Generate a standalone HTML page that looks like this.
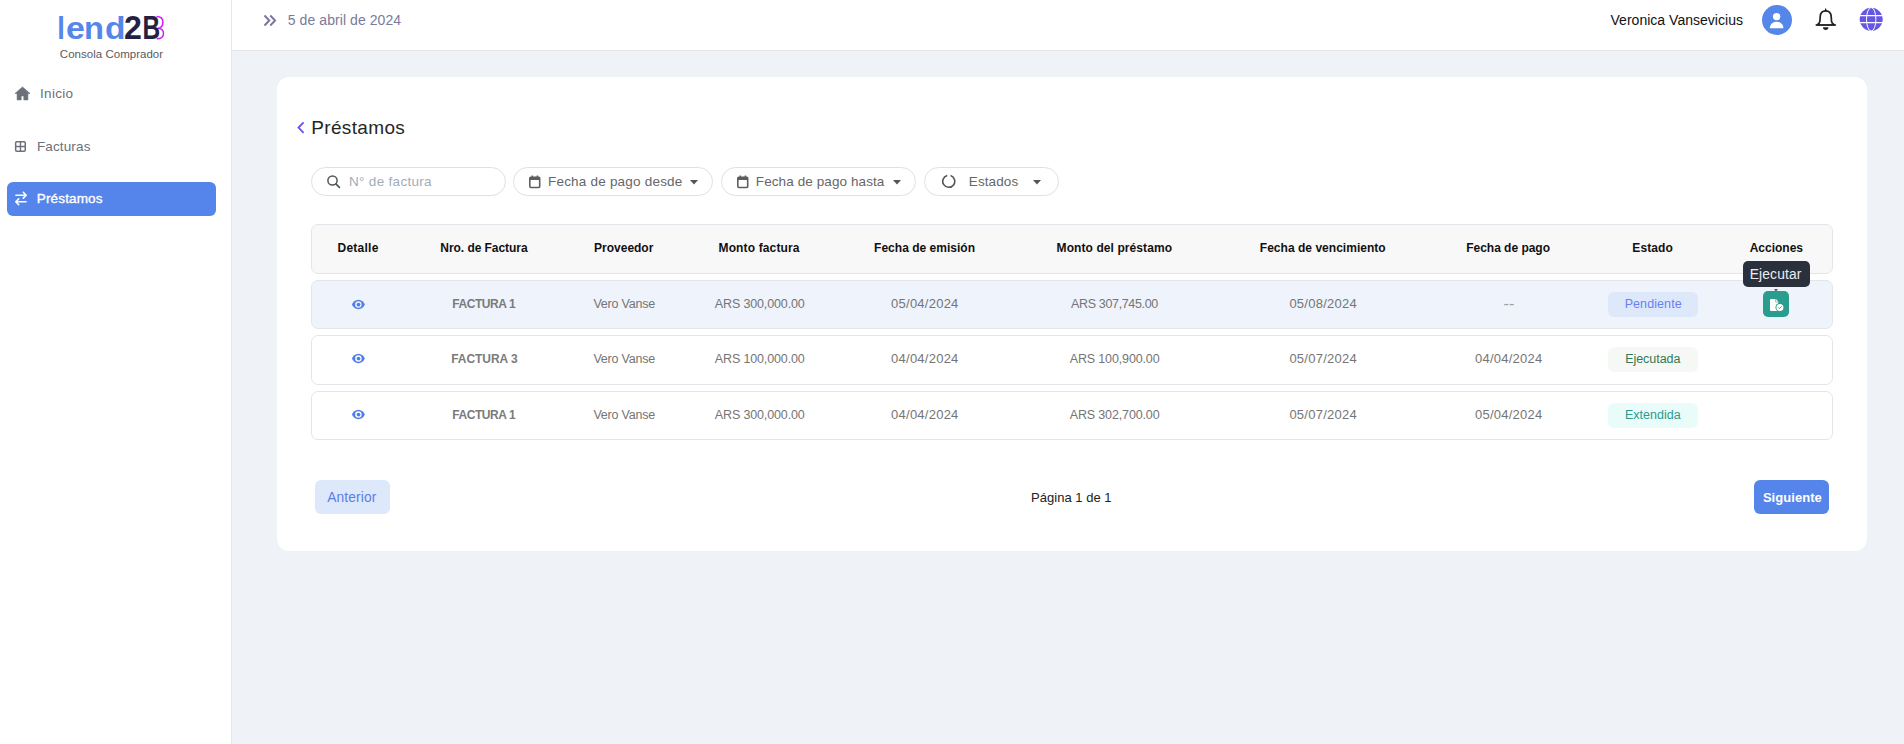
<!DOCTYPE html>
<html><head><meta charset="utf-8">
<style>
*{box-sizing:border-box;margin:0;padding:0}
html,body{width:1904px;height:744px;overflow:hidden;background:#eff2f7;font-family:"Liberation Sans",sans-serif}
.abs{position:absolute}
.t{position:absolute;white-space:nowrap;line-height:normal}
.box{position:absolute}
</style></head><body>
<div class="box" style="left:0;top:0;width:231px;height:744px;background:#fff"></div>
<div class="box" style="left:231px;top:0;width:1px;height:744px;background:#e4e6eb"></div>
<div class="box" style="left:232px;top:0;width:1672px;height:50px;background:#fff"></div>
<div class="box" style="left:232px;top:50px;width:1672px;height:1px;background:#e4e6eb"></div>
<svg class="abs" style="left:150px;top:10px" width="20" height="34" viewBox="150 10 20 34"><path d="M156.5 16.4C160.6 16.4 162.9 18.6 162.9 21.9C162.9 25.2 160.8 27.6 158.6 28.3C161.4 28.9 163.5 31 163.5 33.4C163.5 36.6 161.2 38.7 156.8 38.7" fill="none" stroke="#d21cf5" stroke-width="1.5"/></svg>
<div class="t" style="left:56.80px;top:11px;font-size:31px;font-weight:bold;color:#5586ea;transform-origin:2.00px 0;transform:scaleX(0.880)">l</div>
<div class="t" style="left:65.70px;top:11px;font-size:31px;font-weight:bold;color:#5586ea;transform-origin:1.00px 0;transform:scaleX(1.093)">e</div>
<div class="t" style="left:84.20px;top:11px;font-size:31px;font-weight:bold;color:#5586ea;transform-origin:2.00px 0;transform:scaleX(1.053)">n</div>
<div class="t" style="left:104.50px;top:11px;font-size:31px;font-weight:bold;color:#5586ea;transform-origin:1.00px 0;transform:scaleX(1.081)">d</div>
<div class="t" style="left:124.30px;top:9px;font-size:33.4px;font-weight:bold;color:#251f41;transform-origin:1.00px 0;transform:scaleX(0.963)">2</div>
<div class="t" style="left:141.90px;top:9px;font-size:33.4px;font-weight:bold;color:#251f41;transform-origin:2.00px 0;transform:scaleX(0.733)">B</div>
<div class="t" style="left:59.80px;top:47.60px;font-size:11.5px;color:#5a5a5a;letter-spacing:0.025px;">Consola Comprador</div>
<svg class="abs" style="left:14px;top:86px" width="17" height="15" viewBox="0 0 17 15"><path d="M8.5 0.9L1 7.5h2.1v6.4h4.1V9.9h2.6v4h4.1V7.5H16z" fill="#6c7079" stroke="#6c7079" stroke-width="0.6" stroke-linejoin="round"/></svg>
<div class="t" style="left:40.00px;top:86.00px;font-size:13.5px;color:#6b7079;letter-spacing:0.32px;">Inicio</div>
<svg class="abs" style="left:14px;top:140px" width="13" height="13" viewBox="0 0 13 13"><rect x="1.65" y="1.65" width="9.6" height="9.6" rx="1.2" fill="none" stroke="#6c7079" stroke-width="1.5"/><path d="M6.45 1.6v9.7M1.6 6.45h9.7" stroke="#6c7079" stroke-width="1.4"/></svg>
<div class="t" style="left:36.90px;top:139.00px;font-size:13.5px;color:#6b7079;letter-spacing:0.143px;">Facturas</div>
<div class="box" style="left:7px;top:182px;width:209px;height:34px;background:#5585ea;border-radius:6px"></div>
<svg class="abs" style="left:0;top:176px" width="40" height="40" viewBox="0 0 40 40"><path d="M15.9 19.2h10M23.3 16.3l2.9 2.9-2.9 2.9M26 25.8H16M18.7 22.9l-2.9 2.9 2.9 2.9" fill="none" stroke="#fff" stroke-width="1.6" stroke-linecap="round" stroke-linejoin="round"/></svg>
<div class="t" style="left:36.80px;top:191.10px;font-size:13.5px;color:#fff;letter-spacing:0.15px;-webkit-text-stroke:0.35px #fff;">Préstamos</div>
<svg class="abs" style="left:263px;top:14px" width="14" height="13" viewBox="0 0 14 13"><path d="M1.5 1.5l4.8 5-4.8 5M7.3 1.5l4.8 5-4.8 5" fill="none" stroke="#76759a" stroke-width="1.9"/></svg>
<div class="t" style="left:287.80px;top:11.70px;font-size:14px;color:#7a7a9a;letter-spacing:0.071px;">5 de abril de 2024</div>
<div class="t" style="left:1610.50px;top:11.70px;font-size:14px;color:#111;letter-spacing:0.021px;">Veronica Vansevicius</div>
<svg class="abs" style="left:1762px;top:5px" width="30" height="30" viewBox="0 0 30 30"><circle cx="15" cy="15" r="15" fill="#5586ea"/><circle cx="14.6" cy="11.6" r="3.7" fill="#fff"/><path d="M7.8 23.3c0-4 3.2-6.6 6.8-6.6s6.8 2.6 6.8 6.6z" fill="#fff"/></svg>
<svg class="abs" style="left:1814px;top:6px" width="24" height="26" viewBox="1814 6 24 26"><path d="M1825.7 7.8L1824.3 11.2H1827.1z" fill="#222"/><path d="M1825.7 10.8C1822.3 10.8 1820.4 13.2 1820.2 16.6L1819.9 21.3C1819.7 22.9 1818.5 24 1817 25H1834.4C1832.9 24 1831.7 22.9 1831.5 21.3L1831.2 16.6C1831 13.2 1829.1 10.8 1825.7 10.8z" fill="none" stroke="#222" stroke-width="1.7" stroke-linejoin="round"/><path d="M1816.2 25H1835.4" stroke="#222" stroke-width="1.6" stroke-linecap="round"/><path d="M1823 27.3H1828.4A2.7 2.6 0 0 1 1823 27.3z" fill="#222"/></svg>
<svg class="abs" style="left:1859px;top:7px" width="25" height="25" viewBox="0 0 25 25"><circle cx="12.2" cy="12.3" r="11.5" fill="#6656e6"/><ellipse cx="12.2" cy="12.3" rx="4.7" ry="11.8" fill="none" stroke="#fff" stroke-width="1"/><path d="M0 8.55h25M0 15.55h25" stroke="#fff" stroke-width="1.15"/></svg>
<div class="box" style="left:277px;top:77px;width:1590px;height:474px;background:#fff;border-radius:12px"></div>
<svg class="abs" style="left:295.5px;top:121px" width="10" height="13" viewBox="0 0 10 13"><path d="M7.6 1.4L2.5 6.6l5.1 5.2" fill="none" stroke="#6a4ff0" stroke-width="1.8"/></svg>
<div class="t" style="left:311.20px;top:116.80px;font-size:19px;color:#262626;letter-spacing:0.35px;">Préstamos</div>
<div class="box" style="left:311px;top:167px;width:195px;height:29px;border:1px solid #dfe0e6;border-radius:15px;background:#fff"></div>
<svg class="abs" style="left:326px;top:174px" width="16" height="16" viewBox="0 0 16 16"><circle cx="6.5" cy="6.5" r="4.6" fill="none" stroke="#555" stroke-width="1.5"/><path d="M9.9 9.9L13.4 13.4" stroke="#555" stroke-width="1.7" stroke-linecap="round"/></svg>
<div class="t" style="left:349.00px;top:174.00px;font-size:13.5px;color:#a3abbb;letter-spacing:0.308px;">N° de factura</div>
<div class="box" style="left:513px;top:167px;width:200px;height:29px;border:1px solid #dfe0e6;border-radius:15px;background:#fff"></div>
<svg class="abs" style="left:529px;top:175px" width="13" height="14" viewBox="0 0 13 14"><rect x="0.8" y="2.2" width="9.9" height="10.3" rx="1" fill="none" stroke="#5e5e5e" stroke-width="1.6"/><rect x="0.8" y="2.2" width="9.9" height="2.8" fill="#5e5e5e"/><path d="M3.3 0.5v2.5M8.4 0.5v2.5" stroke="#5e5e5e" stroke-width="1.5"/></svg>
<div class="t" style="left:548.00px;top:174.10px;font-size:13.5px;color:#666;letter-spacing:0.206px;">Fecha de pago desde</div>
<svg class="abs" style="left:690px;top:180px" width="8" height="5" viewBox="0 0 8 5"><path d="M0 0h8L4 4.6z" fill="#555"/></svg>
<div class="box" style="left:721px;top:167px;width:195px;height:29px;border:1px solid #dfe0e6;border-radius:15px;background:#fff"></div>
<svg class="abs" style="left:737px;top:175px" width="13" height="14" viewBox="0 0 13 14"><rect x="0.8" y="2.2" width="9.9" height="10.3" rx="1" fill="none" stroke="#5e5e5e" stroke-width="1.6"/><rect x="0.8" y="2.2" width="9.9" height="2.8" fill="#5e5e5e"/><path d="M3.3 0.5v2.5M8.4 0.5v2.5" stroke="#5e5e5e" stroke-width="1.5"/></svg>
<div class="t" style="left:755.80px;top:174.10px;font-size:13.5px;color:#666;letter-spacing:0.094px;">Fecha de pago hasta</div>
<svg class="abs" style="left:893px;top:180px" width="8" height="5" viewBox="0 0 8 5"><path d="M0 0h8L4 4.6z" fill="#555"/></svg>
<div class="box" style="left:924px;top:167px;width:135px;height:29px;border:1px solid #dfe0e6;border-radius:15px;background:#fff"></div>
<svg class="abs" style="left:941px;top:174px" width="15" height="15" viewBox="0 0 15 15"><path d="M9.6 1.6A6 6 0 1 1 6.2 1.5" fill="none" stroke="#555" stroke-width="1.6"/></svg>
<div class="t" style="left:968.80px;top:174.10px;font-size:13.5px;color:#666;letter-spacing:0.1px;">Estados</div>
<svg class="abs" style="left:1033px;top:180px" width="8" height="5" viewBox="0 0 8 5"><path d="M0 0h8L4 4.6z" fill="#555"/></svg>
<div class="box" style="left:311px;top:224px;width:1522px;height:50px;border:1px solid #e4e5ea;border-radius:7px;background:#f8f8f8"></div>
<div class="box" style="left:311px;top:280px;width:1522px;height:49px;border:1px solid #e4e5ea;border-radius:7px;background:#eef3fc"></div>
<div class="box" style="left:311px;top:335px;width:1522px;height:50px;border:1px solid #e4e5ea;border-radius:7px;background:#fff"></div>
<div class="box" style="left:311px;top:391px;width:1522px;height:49px;border:1px solid #e4e5ea;border-radius:7px;background:#fff"></div>
<div class="t" style="left:337.50px;top:241.30px;font-size:12px;color:#111;font-weight:bold;letter-spacing:0.25px;">Detalle</div>
<div class="t" style="left:440.30px;top:241.30px;font-size:12px;color:#111;font-weight:bold;letter-spacing:-0.05px;">Nro. de Factura</div>
<div class="t" style="left:594.10px;top:241.30px;font-size:12px;color:#111;font-weight:bold;letter-spacing:-0.013px;">Proveedor</div>
<div class="t" style="left:718.50px;top:241.30px;font-size:12px;color:#111;font-weight:bold;letter-spacing:0.142px;">Monto factura</div>
<div class="t" style="left:874.10px;top:241.30px;font-size:12px;color:#111;font-weight:bold;letter-spacing:0.013px;">Fecha de emisión</div>
<div class="t" style="left:1056.60px;top:241.30px;font-size:12px;color:#111;font-weight:bold;letter-spacing:0.082px;">Monto del préstamo</div>
<div class="t" style="left:1259.80px;top:241.30px;font-size:12px;color:#111;font-weight:bold;letter-spacing:0.026px;">Fecha de vencimiento</div>
<div class="t" style="left:1466.20px;top:241.30px;font-size:12px;color:#111;font-weight:bold;letter-spacing:-0.017px;">Fecha de pago</div>
<div class="t" style="left:1632.30px;top:241.30px;font-size:12px;color:#111;font-weight:bold;letter-spacing:0.1px;">Estado</div>
<div class="t" style="left:1749.70px;top:241.30px;font-size:12px;color:#111;font-weight:bold;">Acciones</div>
<svg class="abs" style="left:351px;top:298.5px" width="15" height="11" viewBox="0 0 15 11"><path d="M7.4 0.8C4.3 0.8 1.9 3 0.9 5.5c1 2.5 3.4 4.7 6.5 4.7s5.5-2.2 6.5-4.7C12.9 3 10.5 0.8 7.4 0.8z" fill="#4f7fe8"/><circle cx="7.4" cy="5.5" r="3.2" fill="#eef3fc"/><circle cx="7.5" cy="5.6" r="1.9" fill="#4f7fe8"/></svg>
<div class="t" style="left:452.15px;top:297.30px;font-size:12px;color:#7b7b7b;font-weight:bold;letter-spacing:-0.412px;">FACTURA 1</div>
<div class="t" style="left:593.40px;top:297.30px;font-size:12.5px;color:#757575;letter-spacing:-0.2px;">Vero Vanse</div>
<div class="t" style="left:714.80px;top:297.30px;font-size:12.5px;color:#757575;letter-spacing:-0.138px;">ARS 300,000.00</div>
<div class="t" style="left:891.10px;top:296.30px;font-size:13px;color:#757575;letter-spacing:0.244px;">05/04/2024</div>
<div class="t" style="left:1071.10px;top:297.30px;font-size:12.5px;color:#757575;letter-spacing:-0.354px;">ARS 307,745.00</div>
<div class="t" style="left:1289.40px;top:296.30px;font-size:13px;color:#757575;letter-spacing:0.244px;">05/08/2024</div>
<div class="t" style="left:1503.60px;top:294.60px;font-size:16px;color:#a0a0a0;">--</div>
<div class="box" style="left:1608px;top:291.8px;width:90px;height:25px;border-radius:6px;background:#dde9fa"></div>
<div class="t" style="left:1624.65px;top:297.30px;font-size:12.5px;color:#6a7ff0;letter-spacing:0.088px;">Pendiente</div>
<svg class="abs" style="left:351px;top:353.4px" width="15" height="11" viewBox="0 0 15 11"><path d="M7.4 0.8C4.3 0.8 1.9 3 0.9 5.5c1 2.5 3.4 4.7 6.5 4.7s5.5-2.2 6.5-4.7C12.9 3 10.5 0.8 7.4 0.8z" fill="#4f7fe8"/><circle cx="7.4" cy="5.5" r="3.2" fill="#fff"/><circle cx="7.5" cy="5.6" r="1.9" fill="#4f7fe8"/></svg>
<div class="t" style="left:451.25px;top:352.20px;font-size:12px;color:#7b7b7b;font-weight:bold;letter-spacing:-0.062px;">FACTURA 3</div>
<div class="t" style="left:593.40px;top:352.20px;font-size:12.5px;color:#757575;letter-spacing:-0.2px;">Vero Vanse</div>
<div class="t" style="left:714.80px;top:352.20px;font-size:12.5px;color:#757575;letter-spacing:-0.138px;">ARS 100,000.00</div>
<div class="t" style="left:891.10px;top:351.20px;font-size:13px;color:#757575;letter-spacing:0.244px;">04/04/2024</div>
<div class="t" style="left:1069.70px;top:352.20px;font-size:12.5px;color:#757575;letter-spacing:-0.138px;">ARS 100,900.00</div>
<div class="t" style="left:1289.40px;top:351.20px;font-size:13px;color:#757575;letter-spacing:0.244px;">05/07/2024</div>
<div class="t" style="left:1475.00px;top:351.20px;font-size:13px;color:#757575;letter-spacing:0.244px;">04/04/2024</div>
<div class="box" style="left:1608px;top:346.7px;width:90px;height:25px;border-radius:6px;background:#f5f8f4"></div>
<div class="t" style="left:1625.15px;top:352.20px;font-size:12.5px;color:#2f7a58;letter-spacing:-0.037px;">Ejecutada</div>
<svg class="abs" style="left:351px;top:409.3px" width="15" height="11" viewBox="0 0 15 11"><path d="M7.4 0.8C4.3 0.8 1.9 3 0.9 5.5c1 2.5 3.4 4.7 6.5 4.7s5.5-2.2 6.5-4.7C12.9 3 10.5 0.8 7.4 0.8z" fill="#4f7fe8"/><circle cx="7.4" cy="5.5" r="3.2" fill="#fff"/><circle cx="7.5" cy="5.6" r="1.9" fill="#4f7fe8"/></svg>
<div class="t" style="left:452.15px;top:408.10px;font-size:12px;color:#7b7b7b;font-weight:bold;letter-spacing:-0.412px;">FACTURA 1</div>
<div class="t" style="left:593.40px;top:408.10px;font-size:12.5px;color:#757575;letter-spacing:-0.2px;">Vero Vanse</div>
<div class="t" style="left:714.80px;top:408.10px;font-size:12.5px;color:#757575;letter-spacing:-0.138px;">ARS 300,000.00</div>
<div class="t" style="left:891.10px;top:407.10px;font-size:13px;color:#757575;letter-spacing:0.244px;">04/04/2024</div>
<div class="t" style="left:1069.70px;top:408.10px;font-size:12.5px;color:#757575;letter-spacing:-0.138px;">ARS 302,700.00</div>
<div class="t" style="left:1289.40px;top:407.10px;font-size:13px;color:#757575;letter-spacing:0.244px;">05/07/2024</div>
<div class="t" style="left:1475.00px;top:407.10px;font-size:13px;color:#757575;letter-spacing:0.244px;">05/04/2024</div>
<div class="box" style="left:1608px;top:402.6px;width:90px;height:25px;border-radius:6px;background:#e9fcfa"></div>
<div class="t" style="left:1625.00px;top:408.10px;font-size:12.5px;color:#2a9a8c;">Extendida</div>
<div class="box" style="left:1763px;top:291px;width:26px;height:26px;border-radius:5px;background:#2a9d8f"></div>
<svg class="abs" style="left:1763px;top:291px" width="26" height="26" viewBox="1763 291 26 26"><path d="M1771 298.9H1775.5V302.3H1778.4V310a1 1 0 0 1-1 1H1771a1 1 0 0 1-1-1V299.9a1 1 0 0 1 1-1z" fill="#fff"/><path d="M1776.1 299.1L1778.4 301.8H1776.1z" fill="#fff"/><circle cx="1779.9" cy="307.4" r="4.4" fill="#2a9d8f"/><circle cx="1779.9" cy="307.4" r="3.5" fill="#fff"/><path d="M1778.2 307.4l1.2 1.2l2.1-2.2" fill="none" stroke="#2a9d8f" stroke-width="0.9"/></svg>
<div class="box" style="left:1743px;top:261px;width:67px;height:26px;border-radius:5px;background:#2b313c"></div>
<svg class="abs" style="left:1774px;top:288.5px" width="4" height="2.5" viewBox="0 0 4 2.5"><path d="M0 0.3h4L2 2.2z" fill="#2b313c"/></svg>
<div class="t" style="left:1749.70px;top:267.20px;font-size:13.8px;color:#eceef2;letter-spacing:0.157px;">Ejecutar</div>
<div class="box" style="left:315px;top:480px;width:75px;height:34px;border-radius:6px;background:#dde9fb"></div>
<div class="t" style="left:327.20px;top:490.00px;font-size:13.8px;color:#5b7de8;letter-spacing:0.114px;">Anterior</div>
<div class="t" style="left:1031.10px;top:489.90px;font-size:13px;color:#222;letter-spacing:0.017px;">Página 1 de 1</div>
<div class="box" style="left:1754px;top:480px;width:75px;height:34px;border-radius:6px;background:#5585ea"></div>
<div class="t" style="left:1762.90px;top:490.10px;font-size:13px;color:#fff;font-weight:bold;letter-spacing:0.05px;">Siguiente</div>
</body></html>
